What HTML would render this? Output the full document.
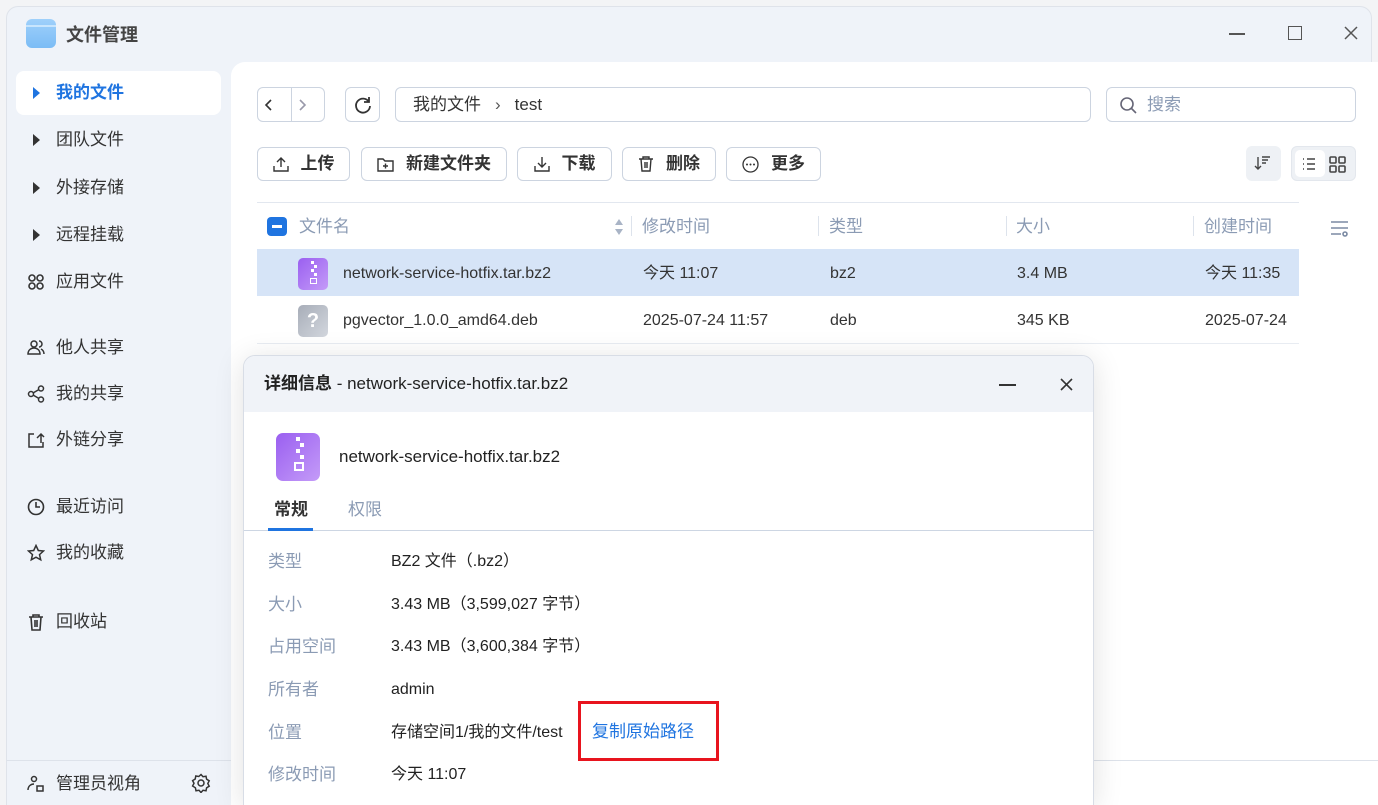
<!DOCTYPE html><html><head><meta charset="utf-8"><style>
*{box-sizing:border-box;margin:0;padding:0}
html,body{width:1378px;height:805px;overflow:hidden}
body{background:#f3f4f6;font-family:"Liberation Sans","Noto Sans CJK SC",sans-serif;position:relative;color:#222;line-height:20px}
.abs{position:absolute;line-height:20px}
.win{left:6px;top:6px;width:1366px;height:799px;background:#eff3f9;border-radius:12px 12px 0 0;border:1px solid #dfe3ea;border-bottom:none;overflow:hidden}
.main{left:231px;top:62px;width:1147px;height:743px;background:#fff;border-top-left-radius:14px}
.nav{left:16px;width:205px;height:44px;font-size:17px;color:#333;display:flex;align-items:center;padding-left:40px}
.nav .ic{position:absolute;left:11px;top:13px;width:18px;height:18px}
.tri{position:absolute;left:17px;top:16px;width:0;height:0;border-left:7px solid #333;border-top:6px solid transparent;border-bottom:6px solid transparent}
.btn{border:1px solid #ccd4e0;border-radius:6px;background:#fff;height:34px;display:flex;align-items:center;justify-content:center;font-size:17px;font-weight:bold;color:#333}
.btn svg{margin-right:12px}
.hd{font-size:17px;color:#8b9bb4;top:217px}
.sep{width:1px;height:20px;background:#dde3ec;top:216px}
.cell{font-size:16px;color:#333}
.lab{left:268px;font-size:17px;color:#8b9bb4}
.val{left:391px;font-size:16px;color:#222}
</style></head><body>
<div class="abs win"></div>
<div class="abs" style="left:26px;top:19px;width:30px;height:29px;border-radius:6px;background:linear-gradient(#9fd0fb,#7bbcf5)"><div style="position:absolute;left:0;top:6px;width:30px;height:2px;background:#c8e5fd"></div></div>
<div class="abs" style="left:66px;top:25px;font-size:18px;font-weight:bold;color:#444">文件管理</div>
<div class="abs" style="left:1229px;top:33px;width:16px;height:1.5px;background:#555"></div>
<div class="abs" style="left:1288px;top:26px;width:14px;height:14px;border:1.5px solid #555"></div>
<svg class="abs" style="left:1344px;top:26px" width="14" height="14"><path d="M1 1L13 13M13 1L1 13" stroke="#555" stroke-width="1.5"/></svg>
<div class="abs nav" style="top:71px;background:#fff;border-radius:8px;color:#1f74e0;font-weight:bold"><span class="tri" style="border-left-color:#1f74e0"></span>我的文件</div>
<div class="abs nav" style="top:118px"><span class="tri"></span>团队文件</div>
<div class="abs nav" style="top:166px"><span class="tri"></span>外接存储</div>
<div class="abs nav" style="top:213px"><span class="tri"></span>远程挂载</div>
<div class="abs nav" style="top:260px"><svg class="ic" viewBox="0 0 18 18"><g fill="none" stroke="#333" stroke-width="1.6"><circle cx="5" cy="5" r="3"/><circle cx="13" cy="5" r="3"/><circle cx="5" cy="13" r="3"/><circle cx="13" cy="13" r="3"/></g></svg>应用文件</div>
<div class="abs nav" style="top:326px"><svg class="ic" viewBox="0 0 18 18"><g fill="none" stroke="#333" stroke-width="1.5"><circle cx="7" cy="5" r="3"/><path d="M1 15c0-4 3-6 6-6s6 2 6 6zM12 2a3 3 0 010 6M14 10c2 1 3 3 3 5"/></g></svg>他人共享</div>
<div class="abs nav" style="top:372px"><svg class="ic" viewBox="0 0 18 18"><g fill="none" stroke="#333" stroke-width="1.5"><circle cx="4" cy="9" r="2.5"/><circle cx="14" cy="3.5" r="2.5"/><circle cx="14" cy="14.5" r="2.5"/><path d="M6 8l6-3.5M6 10l6 3.5"/></g></svg>我的共享</div>
<div class="abs nav" style="top:418px"><svg class="ic" viewBox="0 0 18 18"><g fill="none" stroke="#333" stroke-width="1.5"><path d="M7 3H2v13h14v-5M10 7l4-4 3 3M14 3v9"/></g></svg>外链分享</div>
<div class="abs nav" style="top:485px"><svg class="ic" viewBox="0 0 18 18"><g fill="none" stroke="#333" stroke-width="1.6"><circle cx="9" cy="9" r="7.5"/><path d="M9 4v5h4"/></g></svg>最近访问</div>
<div class="abs nav" style="top:531px"><svg class="ic" viewBox="0 0 18 18"><path d="M9 1.5l2.3 5 5.2.5-4 3.6 1.2 5.2L9 13.2l-4.7 2.6 1.2-5.2-4-3.6 5.2-.5z" fill="none" stroke="#333" stroke-width="1.5"/></svg>我的收藏</div>
<div class="abs nav" style="top:600px"><svg class="ic" viewBox="0 0 18 18"><g fill="none" stroke="#333" stroke-width="1.6"><path d="M2 4h14M6 4V2h6v2M4 4l1 13h8l1-13M8 7v7M10 7v7"/></g></svg>回收站</div>
<div class="abs" style="left:6px;top:760px;width:225px;height:1px;background:#dde2ea"></div>
<div class="abs nav" style="top:762px"><svg class="ic" viewBox="0 0 18 18"><g fill="none" stroke="#333" stroke-width="1.5"><circle cx="7" cy="4" r="2.5"/><path d="M1 15c0-4 3-6 6-6M10 11h6v5h-6z"/></g></svg>管理员视角</div>
<svg class="abs" style="left:191px;top:773px" width="20" height="20" viewBox="0 0 20 20"><g fill="none" stroke="#333" stroke-width="1.5"><circle cx="10" cy="10" r="3"/><path d="M10 1.5l2 2.2 3-.5.6 3 2.6 1.6-1.4 2.7 1.4 2.7-2.6 1.6-.6 3-3-.5-2 2.2-2-2.2-3 .5-.6-3L1.6 13l1.4-2.7L1.6 7.6l2.6-1.6.6-3 3 .5z"/></g></svg>
<div class="abs main"></div>
<div class="abs btn" style="left:257px;top:87px;width:68px;height:35px;justify-content:space-around"><svg width="10" height="14"><path d="M7 2L2 7l5 5" fill="none" stroke="#333" stroke-width="1.6"/></svg><span style="position:absolute;left:33px;top:0;width:1px;height:33px;background:#ccd4e0"></span><svg width="10" height="14"><path d="M3 2l5 5-5 5" fill="none" stroke="#99a" stroke-width="1.6"/></svg></div>
<div class="abs btn" style="left:345px;top:87px;width:35px;height:35px"><svg width="20" height="20" style="margin:0"><path d="M16 7A7 7 0 1 0 17 11M16 2v5h-5" fill="none" stroke="#333" stroke-width="1.8"/></svg></div>
<div class="abs btn" style="left:395px;top:87px;width:696px;height:35px;justify-content:flex-start;padding-left:17px;font-weight:normal;font-size:17px">我的文件<span style="margin:0 14px;color:#555">›</span>test</div>
<div class="abs btn" style="left:1106px;top:87px;width:250px;height:35px;justify-content:flex-start;padding-left:12px;font-weight:normal;color:#8b9bb4"><svg width="18" height="18" style="margin-right:10px"><circle cx="8" cy="8" r="6" fill="none" stroke="#667" stroke-width="1.6"/><path d="M12.5 12.5L17 17" stroke="#667" stroke-width="1.6"/></svg>搜索</div>
<div class="abs btn" style="left:257px;top:147px;width:93px"><svg width="16" height="16"><path d="M8 11V2M4 6l4-4 4 4M1 10v5h14v-5" fill="none" stroke="#333" stroke-width="1.4"/></svg>上传</div>
<div class="abs btn" style="left:361px;top:147px;width:146px"><svg width="17" height="15"><path d="M1 2h5l2 2h8v10H1z" fill="none" stroke="#333" stroke-width="1.4"/><path d="M8.5 6.5v5M6 9h5" stroke="#333" stroke-width="1.4"/></svg>新建文件夹</div>
<div class="abs btn" style="left:517px;top:147px;width:95px"><svg width="16" height="16"><path d="M8 1v10M4 7l4 4 4-4M1 10v5h14v-5" fill="none" stroke="#333" stroke-width="1.4"/></svg>下载</div>
<div class="abs btn" style="left:622px;top:147px;width:94px"><svg width="16" height="16"><path d="M1 3h14M5 3V1h6v2M3 3l1 12h8l1-12M7 6v6M9 6v6" fill="none" stroke="#333" stroke-width="1.4"/></svg>删除</div>
<div class="abs btn" style="left:726px;top:147px;width:95px"><svg width="17" height="17"><circle cx="8.5" cy="8.5" r="7.5" fill="none" stroke="#333" stroke-width="1.3"/><circle cx="5" cy="8.5" r="1" fill="#333"/><circle cx="8.5" cy="8.5" r="1" fill="#333"/><circle cx="12" cy="8.5" r="1" fill="#333"/></svg>更多</div>
<div class="abs" style="left:1246px;top:146px;width:35px;height:35px;border-radius:6px;background:#eef1f5"><svg width="35" height="35"><path d="M12 11v12M9 20l3 3 3-3M16 11h8M16 14h6M16 17h4" fill="none" stroke="#444" stroke-width="1.4"/></svg></div>
<div class="abs" style="left:1291px;top:146px;width:65px;height:35px;border-radius:6px;background:#eef1f5;border:1px solid #e3e7ed"><div style="position:absolute;left:3px;top:3px;width:30px;height:27px;background:#fff;border-radius:5px"></div><svg class="abs" style="left:0;top:0" width="65" height="35"><g stroke="#444" stroke-width="1.6" fill="none"><path d="M11 12h1M11 17h1M11 22h1M15 12h8M15 17h8M15 22h8"/><rect x="38" y="10" width="6" height="6" rx="1"/><rect x="47" y="10" width="6" height="6" rx="1"/><rect x="38" y="19" width="6" height="6" rx="1"/><rect x="47" y="19" width="6" height="6" rx="1"/></g></svg></div>
<div class="abs" style="left:257px;top:202px;width:1042px;height:1px;background:#e2e7ef"></div>
<div class="abs" style="left:267px;top:217px;width:20px;height:19px;border-radius:4px;background:#1f74e0"><div style="position:absolute;left:5px;top:8px;width:10px;height:3px;background:#fff"></div></div>
<div class="abs hd" style="left:299px">文件名</div>
<svg class="abs" style="left:614px;top:217px" width="10" height="20"><path d="M1 8l4-6 4 6zM1 12l4 6 4-6z" fill="#a9b4c6"/></svg>
<div class="abs sep" style="left:631px"></div><div class="abs hd" style="left:642px">修改时间</div>
<div class="abs sep" style="left:818px"></div><div class="abs hd" style="left:829px">类型</div>
<div class="abs sep" style="left:1006px"></div><div class="abs hd" style="left:1016px">大小</div>
<div class="abs sep" style="left:1193px"></div><div class="abs hd" style="left:1204px">创建时间</div>
<svg class="abs" style="left:1330px;top:219px" width="20" height="18"><g stroke="#7b8aa3" stroke-width="1.6" fill="none"><path d="M1 3h17M1 9h17M1 15h10"/><circle cx="15" cy="15" r="2" fill="#fff"/></g></svg>
<div class="abs" style="left:257px;top:249px;width:1042px;height:47px;background:#d6e4f7"></div>
<div class="abs" style="left:298px;top:258px;width:30px;height:32px;border-radius:5px;background:linear-gradient(135deg,#9a5ff0,#c49bf8)"><div style="position:absolute;left:13px;top:3px;width:3px;height:3px;background:#fff"></div><div style="position:absolute;left:16px;top:7px;width:3px;height:3px;background:#fff"></div><div style="position:absolute;left:13px;top:11px;width:3px;height:3px;background:#fff"></div><div style="position:absolute;left:16px;top:15px;width:3px;height:3px;background:#fff"></div><div style="position:absolute;left:12px;top:20px;width:7px;height:6px;border:1.5px solid #fff"></div></div>
<div class="abs cell" style="left:343px;top:264px">network-service-hotfix.tar.bz2</div>
<div class="abs cell" style="left:643px;top:264px">今天 11:07</div>
<div class="abs cell" style="left:830px;top:264px">bz2</div>
<div class="abs cell" style="left:1017px;top:264px">3.4 MB</div>
<div class="abs cell" style="left:1205px;top:264px">今天 11:35</div>
<div class="abs" style="left:298px;top:305px;width:30px;height:32px;border-radius:5px;background:linear-gradient(135deg,#a7adb8,#d3d7de);color:#fff;font-size:20px;font-weight:bold;text-align:center;line-height:32px">?</div>
<div class="abs cell" style="left:343px;top:311px">pgvector_1.0.0_amd64.deb</div>
<div class="abs cell" style="left:643px;top:311px">2025-07-24 11:57</div>
<div class="abs cell" style="left:830px;top:311px">deb</div>
<div class="abs cell" style="left:1017px;top:311px">345 KB</div>
<div class="abs cell" style="left:1205px;top:311px">2025-07-24</div>
<div class="abs" style="left:257px;top:343px;width:1042px;height:1px;background:#e8ecf2"></div>
<div class="abs" style="left:1093px;top:760px;width:285px;height:1px;background:#dde2ea"></div>
<div class="abs" style="left:243px;top:355px;width:851px;height:450px;background:#fff;border:1px solid #d8dde6;border-bottom:none;border-radius:12px 12px 0 0;box-shadow:0 4px 30px rgba(0,0,0,.12);overflow:hidden">
<div style="height:56px;background:#f0f3f8;padding:18px 0 0 20px;font-size:17px;color:#222;line-height:20px"><b>详细信息</b> - network-service-hotfix.tar.bz2</div>
<div class="abs" style="left:755px;top:28px;width:17px;height:1.5px;background:#333"></div>
<svg class="abs" style="left:816px;top:22px" width="13" height="13"><path d="M1 1L12 12M12 1L1 12" stroke="#333" stroke-width="1.6"/></svg>
</div>
<div class="abs" style="left:276px;top:433px;width:44px;height:48px;border-radius:7px;background:linear-gradient(135deg,#9a5ff0,#c49bf8)"><div style="position:absolute;left:20px;top:4px;width:4px;height:4px;background:#fff"></div><div style="position:absolute;left:24px;top:10px;width:4px;height:4px;background:#fff"></div><div style="position:absolute;left:20px;top:16px;width:4px;height:4px;background:#fff"></div><div style="position:absolute;left:24px;top:22px;width:4px;height:4px;background:#fff"></div><div style="position:absolute;left:18px;top:29px;width:10px;height:9px;border:2px solid #fff"></div></div>
<div class="abs" style="left:339px;top:447px;font-size:17px">network-service-hotfix.tar.bz2</div>
<div class="abs" style="left:274px;top:500px;font-size:17px;font-weight:bold;color:#333">常规</div>
<div class="abs" style="left:348px;top:500px;font-size:17px;color:#8b9bb4">权限</div>
<div class="abs" style="left:244px;top:530px;width:849px;height:1px;background:#cdd6e3"></div>
<div class="abs" style="left:268px;top:528px;width:45px;height:3px;background:#1f74e0"></div>
<div class="abs lab" style="top:552px">类型</div><div class="abs val" style="top:552px">BZ2 文件（.bz2）</div>
<div class="abs lab" style="top:595px">大小</div><div class="abs val" style="top:595px">3.43 MB（3,599,027 字节）</div>
<div class="abs lab" style="top:637px">占用空间</div><div class="abs val" style="top:637px">3.43 MB（3,600,384 字节）</div>
<div class="abs lab" style="top:680px">所有者</div><div class="abs val" style="top:680px">admin</div>
<div class="abs lab" style="top:723px">位置</div><div class="abs val" style="top:723px">存储空间1/我的文件/test</div>
<div class="abs" style="left:592px;top:722px;font-size:17px;color:#1f74e0">复制原始路径</div>
<div class="abs" style="left:578px;top:701px;width:141px;height:60px;border:3px solid #e8141e"></div>
<div class="abs lab" style="top:765px">修改时间</div><div class="abs val" style="top:765px">今天 11:07</div>
</body></html>
